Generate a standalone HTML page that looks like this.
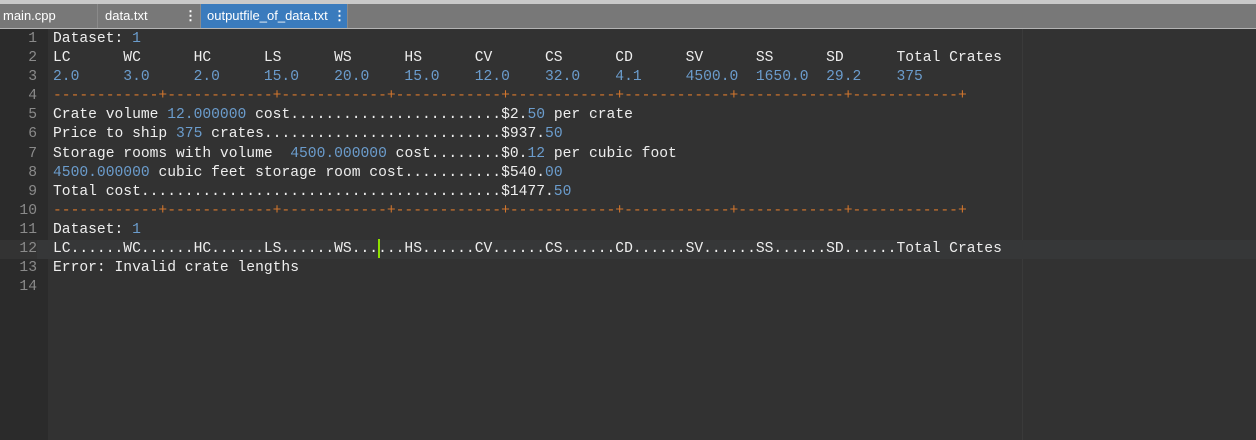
<!DOCTYPE html>
<html><head><style>
html,body{margin:0;padding:0;width:1256px;height:440px;overflow:hidden;background:#323232;}
#top{position:absolute;left:0;top:0;width:1256px;height:4px;background:#c9c9c9;}
#tabs{position:absolute;left:0;top:4px;width:1256px;height:24px;background:#787878;border-bottom:1px solid #b4b4b4;font-family:"Liberation Sans",sans-serif;font-size:13px;color:#fff;}
.tab{position:absolute;top:0;height:24px;line-height:24px;box-sizing:border-box;border-right:1px solid #8a8a8a;}
.dots{position:absolute;top:0;font-weight:bold;}
#gutter{position:absolute;left:0;top:29px;width:48px;height:411px;background:#2b2b2b;}
#ed{position:absolute;left:0;top:30px;width:1256px;font-family:"Liberation Mono",monospace;font-size:14.65px;}
.ln{height:19.1px;line-height:19px;position:relative;white-space:pre;color:#eee;}
.ln .n{position:absolute;left:0;width:37px;text-align:right;color:#8a8a8a;}
.ln .t{position:absolute;left:53px;}
.b{color:#6b9ccc;}.o{color:#d2762d;}
.act{background:#363738;}
.act .n{background:#333;}
#margin{position:absolute;left:1022px;top:29px;width:1px;height:411px;background:#3a3a3a;}
#cur{position:absolute;left:378px;top:239px;width:2px;height:19px;background:#8fe000;}
</style></head><body>
<div id="top"></div>
<div id="tabs">
<div class="tab" style="left:0;width:98px;padding-left:3px;">main.cpp</div>
<div class="tab" style="left:98px;width:103px;padding-left:7px;">data.txt<span class="dots" style="left:86px">⋮</span></div>
<div class="tab" style="left:201px;width:147px;padding-left:6px;background:#3a7bbd;">outputfile_of_data.txt<span class="dots" style="left:132px">⋮</span></div>
</div>
<div id="gutter"></div>
<div id="margin"></div>
<div id="ed">
<div class="ln"><span class="n">1</span><span class="t">Dataset: <span class="b">1</span></span></div>
<div class="ln"><span class="n">2</span><span class="t">LC      WC      HC      LS      WS      HS      CV      CS      CD      SV      SS      SD      Total Crates</span></div>
<div class="ln"><span class="n">3</span><span class="t b">2.0     3.0     2.0     15.0    20.0    15.0    12.0    32.0    4.1     4500.0  1650.0  29.2    375</span></div>
<div class="ln"><span class="n">4</span><span class="t o">------------+------------+------------+------------+------------+------------+------------+------------+</span></div>
<div class="ln"><span class="n">5</span><span class="t">Crate volume <span class="b">12.000000</span> cost........................$2.<span class="b">50</span> per crate</span></div>
<div class="ln"><span class="n">6</span><span class="t">Price to ship <span class="b">375</span> crates...........................$937.<span class="b">50</span></span></div>
<div class="ln"><span class="n">7</span><span class="t">Storage rooms with volume  <span class="b">4500.000000</span> cost........$0.<span class="b">12</span> per cubic foot</span></div>
<div class="ln"><span class="n">8</span><span class="t"><span class="b">4500.000000</span> cubic feet storage room cost...........$540.<span class="b">00</span></span></div>
<div class="ln"><span class="n">9</span><span class="t">Total cost.........................................$1477.<span class="b">50</span></span></div>
<div class="ln"><span class="n">10</span><span class="t o">------------+------------+------------+------------+------------+------------+------------+------------+</span></div>
<div class="ln"><span class="n">11</span><span class="t">Dataset: <span class="b">1</span></span></div>
<div class="ln act"><span class="n">12</span><span class="t">LC......WC......HC......LS......WS......HS......CV......CS......CD......SV......SS......SD......Total Crates</span></div>
<div class="ln"><span class="n">13</span><span class="t">Error: Invalid crate lengths</span></div>
<div class="ln"><span class="n">14</span><span class="t"></span></div>
</div>
<div id="cur"></div>
</body></html>
